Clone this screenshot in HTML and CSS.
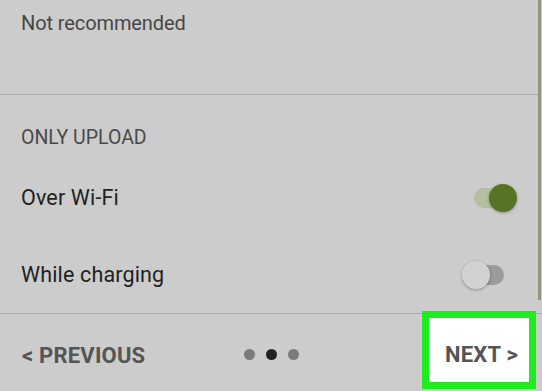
FILE: index.html
```html
<!DOCTYPE html>
<html>
<head>
<meta charset="utf-8">
<link rel="stylesheet" href="styles.css">
</head>
<body>
<div class="screen">
  <div class="scrollbar"></div>
  <section class="top">
    <p class="muted">Not recommended</p>
  </section>
  <section class="upload">
    <h2 class="header">ONLY UPLOAD</h2>
    <div class="row">
      <span class="label">Over Wi-Fi</span>
      <span class="switch on"><span class="track"></span><span class="thumb"></span></span>
    </div>
    <div class="row">
      <span class="label">While charging</span>
      <span class="switch off"><span class="track"></span><span class="thumb"></span></span>
    </div>
  </section>
  <footer class="footer">
    <span class="btn prev">&lt; PREVIOUS</span>
    <span class="dots"><i class="dot"></i><i class="dot active"></i><i class="dot"></i></span>
    <span class="next-wrap"><span class="btn next">NEXT &gt;</span></span>
  </footer>
</div>
</body>
</html>
```
FILE: styles.css
```css
html, body {
  margin: 0;
  padding: 0;
}
body {
  background: #cccccc;
  font-family: Roboto, "Noto Sans", "Liberation Sans", sans-serif;
  width: 542px;
  height: 391px;
  overflow: hidden;
}
.screen {
  position: relative;
  width: 542px;
  height: 391px;
  display: flex;
  flex-direction: column;
}
.scrollbar {
  position: absolute;
  top: 0;
  right: 1px;
  width: 3px;
  height: 300px;
  background: #8e9a76;
}
.top {
  height: 95px;
  box-sizing: border-box;
  padding: 11px 0 0 21px;
  border-bottom: 1px solid #a9a9a9;
  margin-right: 4px;
}
.muted {
  margin: 0;
  font-size: 20px;
  line-height: 24px;
  color: #474747;
  letter-spacing: -0.1px;
}
.upload {
  padding: 31px 0 1px 0;
  border-bottom: 1px solid #a9a9a9;
  height: 219px;
  box-sizing: border-box;
}
.header {
  margin: 0 0 9px 21px;
  font-size: 19.5px;
  font-weight: 400;
  line-height: 24px;
  color: #4a4a4a;
}
.row {
  height: 77px;
  display: flex;
  align-items: center;
  justify-content: space-between;
  padding: 0 25px 0 21px;
}
.label {
  font-size: 21.5px;
  line-height: 24px;
  color: #222222;
  letter-spacing: 0.15px;
}
.switch {
  position: relative;
  width: 48px;
  height: 28px;
}
.switch .track {
  position: absolute;
  left: 5px;
  right: 6px;
  top: 4px;
  height: 20px;
  border-radius: 10px;
}
.switch .thumb {
  position: absolute;
  top: 0;
  width: 28px;
  height: 28px;
  border-radius: 50%;
  box-shadow: 0 1px 3px rgba(0, 0, 0, 0.3);
}
.switch.on .track {
  background: #b3bf9f;
}
.switch.on .thumb {
  right: 0;
  background: #577424;
}
.switch.off {
  margin-right: 7px;
}
.switch.off .track {
  background: #9b9b9b;
}
.switch.off .thumb {
  left: 0;
  background: #d2d2d2;
}
.footer {
  flex: 1;
  display: grid;
  grid-template-columns: 1fr auto 1fr;
  align-items: center;
}
.btn {
  font-size: 22px;
  font-weight: 700;
  color: #555555;
  line-height: 24px;
  letter-spacing: 0.2px;
}
.prev {
  padding-left: 22px;
  margin-top: 6px;
}
.dots {
  display: flex;
  gap: 11px;
  margin-top: 4px;
}
.dot {
  display: block;
  width: 11px;
  height: 11px;
  border-radius: 50%;
  background: #7a7a7a;
}
.dot.active {
  background: #222222;
}
.next-wrap {
  justify-self: end;
  align-self: start;
  margin: -3px 6px 0 0;
  width: 114px;
  height: 78px;
  box-sizing: border-box;
  border: 7px solid #1eec1e;
  background: #ffffff;
  display: flex;
  align-items: center;
  justify-content: flex-end;
  padding: 10px 11px 0 0;
}
```
